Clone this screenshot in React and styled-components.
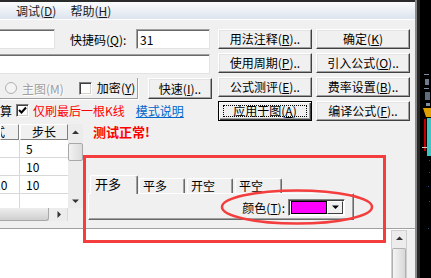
import React from "react";
import styled, { createGlobalStyle, css } from "styled-components";

const GlobalStyle = createGlobalStyle`
  html, body {
    margin: 0;
    padding: 0;
    background: #f0f0f0;
    overflow: hidden;
  }
  body {
    font-family: "Noto Sans CJK SC", "Liberation Sans", sans-serif;
    font-size: 12px;
    color: #000;
  }
`;

const Window = styled.div`
  display: flex;
  width: 431px;
  height: 278px;
  overflow: hidden;
`;

const Panel = styled.div`
  position: relative;
  width: 415px;
  flex: none;
  display: flex;
  flex-direction: column;
  background: #f0f0f0;
`;

const MenuBar = styled.div`
  height: 17px;
  border-top: 2px solid #2b2b2b;
  border-bottom: 1px solid #ffffff;
  background: linear-gradient(#fbfcfd, #dde4ee);
  display: flex;
  align-items: center;
  padding-left: 16px;
  gap: 14px;
  line-height: 14px;
  color: #1b1b1b;
`;

const Upper = styled.div`
  display: flex;
  padding-top: 9px;
`;

const LeftForm = styled.div`
  width: 218px;
  flex: none;
  display: flex;
  flex-direction: column;
`;

const FormRow = styled.div`
  display: flex;
  align-items: center;
  height: ${(p) => p.$h || 20}px;
  margin-top: ${(p) => p.$mt || 0}px;
`;

const TextBox = styled.div`
  box-sizing: border-box;
  width: ${(p) => p.$w}px;
  height: 20px;
  flex: none;
  background: #fff;
  border: 1px solid;
  border-color: #a0a0a0 #e3e3e3 #e3e3e3 #a0a0a0;
  box-shadow: inset 1px 1px 0 #696969;
  padding: 2px 3px;
  line-height: 15px;
  ${(p) =>
    p.$cut &&
    css`
      border-left: none;
      box-shadow: inset 0 1px 0 #696969;
    `}
`;

const Label = styled.span`
  width: ${(p) => p.$w}px;
  margin-left: ${(p) => p.$ml || 0}px;
  flex: none;
  white-space: nowrap;
`;

const ButtonGrid = styled.div`
  display: grid;
  grid-template-columns: 94px 94px;
  grid-auto-rows: 20px;
  column-gap: 4px;
  row-gap: 4px;
  align-content: start;
`;

const Button = styled.div`
  box-sizing: border-box;
  width: ${(p) => (p.$w ? `${p.$w}px` : "auto")};
  height: ${(p) => p.$h || 20}px;
  margin-left: ${(p) => p.$ml || 0}px;
  flex: none;
  display: flex;
  align-items: center;
  justify-content: center;
  background: #f0f0f0;
  border: 1px solid;
  border-color: #fff #404040 #404040 #fff;
  box-shadow: inset -1px -1px 0 #a0a0a0, inset 1px 1px 0 #e3e3e3;
  white-space: nowrap;
  line-height: 14px;
  ${(p) =>
    p.$focus &&
    css`
      border-color: #000;
      box-shadow: inset 1px 1px 0 #fff, inset -1px -1px 0 #404040,
        inset -2px -2px 0 #a0a0a0;
    `}
`;

const FocusRect = styled.span`
  box-sizing: border-box;
  width: calc(100% - 8px);
  height: calc(100% - 6px);
  border: 1px dotted #000;
  display: flex;
  align-items: center;
  justify-content: center;
`;

const Group = styled.div`
  box-sizing: border-box;
  width: 138px;
  height: 21px;
  flex: none;
  display: flex;
  align-items: center;
  padding-left: 5px;
  border-right: 1px solid #a0a0a0;
  border-bottom: 1px solid #a0a0a0;
  box-shadow: 1px 1px 0 #fff;
`;

const RadioDot = styled.span`
  box-sizing: border-box;
  width: 12px;
  height: 12px;
  border-radius: 50%;
  border: 1px solid #b0b0b0;
  background: #f4f4f4;
  flex: none;
`;

const Dim = styled.span`
  color: #a0a0a0;
  text-shadow: 1px 1px 0 #fff;
  margin-left: 5px;
  white-space: nowrap;
`;

const CheckBox = styled.span`
  box-sizing: border-box;
  width: 13px;
  height: 13px;
  flex: none;
  margin-left: ${(p) => p.$ml || 0}px;
  background: #fff;
  border: 1px solid;
  border-color: #808080 #fff #fff #808080;
  box-shadow: inset 1px 1px 0 #404040, inset -1px -1px 0 #d4d0c8;
  display: flex;
  align-items: center;
  justify-content: center;
`;

const Text = styled.span`
  margin-left: ${(p) => p.$ml || 0}px;
  color: ${(p) => p.$color || "#000"};
  white-space: nowrap;
  line-height: 14px;
`;

const Link = styled.span`
  margin-left: ${(p) => p.$ml || 0}px;
  color: #0066cc;
  text-decoration: underline;
  white-space: nowrap;
  line-height: 14px;
`;

const Lower = styled.div`
  display: flex;
  margin-top: 3px;
`;

const GridBox = styled.div`
  width: 83px;
  flex: none;
  display: grid;
  grid-template-columns: 68px 15px;
  grid-template-rows: 84px 13px;
`;

const Table = styled.div`
  display: grid;
  grid-template-columns: 19px 48px;
  grid-template-rows: 16px repeat(4, 18px);
  column-gap: 1px;
  background: #fff;
  overflow: hidden;
`;

const HeadCell = styled.div`
  box-sizing: border-box;
  background: #f0f0f0;
  border: 1px solid;
  border-color: #fff #808080 #808080 #fff;
  overflow: hidden;
  white-space: nowrap;
  line-height: 14px;
  text-indent: ${(p) => p.$indent || 0}px;
  text-align: ${(p) => (p.$center ? "center" : "left")};
`;

const Cell = styled.div`
  box-sizing: border-box;
  border-bottom: 1px solid #d8d8d8;
  box-shadow: 1px 0 0 #d8d8d8;
  overflow: hidden;
  white-space: nowrap;
  line-height: 17px;
  padding-left: 6px;
  text-indent: ${(p) => p.$indent || 0}px;
`;

const VScroll = styled.div`
  display: flex;
  flex-direction: column;
  align-items: stretch;
  background: #ececec;
`;

const ArrowBox = styled.div`
  height: ${(p) => p.$h || 15}px;
  display: flex;
  align-items: center;
  justify-content: center;
  flex: none;
`;

const Thumb = styled.div`
  height: 16px;
  margin: 3px 0 0;
  border: 1px solid #a8a8a8;
  border-radius: 2px;
  background: linear-gradient(90deg, #f2f2f2, #dcdcdc);
`;

const HScroll = styled.div`
  display: flex;
  align-items: center;
  background: #ececec;
  border-right: 1px solid #dadada;
`;

const HThumb = styled.div`
  width: 48px;
  height: 12px;
  border: 1px solid #a8a8a8;
  border-top: none;
  border-left: none;
  border-radius: 0 0 3px 0;
  background: linear-gradient(#eeeeee, #cfcfcf);
`;

const Corner = styled.div`
  background: #f0f0f0;
`;

const Work = styled.div`
  flex: 1;
  display: flex;
  flex-direction: column;
  padding-left: 5px;
`;

const Status = styled.div`
  margin: 1px 0 0 5px;
  color: #ff0000;
  font-size: 13px;
  font-weight: bold;
  line-height: 14px;
`;

const TabControl = styled.div`
  margin-top: 36px;
  width: 266px;
`;

const TabStrip = styled.div`
  display: flex;
  align-items: flex-end;
  height: 18px;
  padding-left: 2px;
`;

const Tab = styled.div`
  box-sizing: border-box;
  width: ${(p) => p.$w}px;
  height: ${(p) => (p.$active ? 19 : 15)}px;
  margin-left: ${(p) => p.$ml || 0}px;
  margin-bottom: ${(p) => (p.$active ? -1 : 0)}px;
  position: relative;
  z-index: ${(p) => (p.$active ? 1 : 0)};
  background: #f0f0f0;
  border-top: 1px solid #fff;
  border-left: 1px solid #fff;
  border-right: 1px solid #696969;
  border-radius: 2px 2px 0 0;
  box-shadow: inset -1px 0 0 #a0a0a0;
  padding-left: ${(p) => (p.$active ? 4 : 3)}px;
  line-height: ${(p) => (p.$active ? 16 : 13)}px;
  font-size: ${(p) => (p.$active ? 13 : 12)}px;
  white-space: nowrap;
`;

const TabBody = styled.div`
  box-sizing: border-box;
  height: 27px;
  border: 1px solid;
  border-color: #fff #696969 #696969 #fff;
  box-shadow: inset -1px -1px 0 #a0a0a0;
  display: flex;
  justify-content: flex-end;
  align-items: flex-start;
  padding: 5px 8px 0 0;
`;

const ColorRow = styled.div`
  display: flex;
  align-items: center;
  gap: 3px;
`;

const Combo = styled.div`
  box-sizing: border-box;
  width: 57px;
  height: 17px;
  display: flex;
  align-items: stretch;
  background: #fff;
  border: 1px solid;
  border-color: #808080 #fff #fff #808080;
  box-shadow: inset 1px 1px 0 #404040;
  padding: 1px 1px 1px 2px;
`;

const Swatch = styled.div`
  width: 34px;
  border: 1px solid #000;
  background: ${(p) => p.$color};
`;

const DropButton = styled.div`
  box-sizing: border-box;
  width: 16px;
  margin-left: auto;
  background: #f0f0f0;
  border: 1px solid;
  border-color: #fff #404040 #404040 #fff;
  display: flex;
  align-items: center;
  justify-content: center;
`;

const Separator = styled.div`
  margin-top: 7px;
  border-top: 1px solid #a0a0a0;
  border-bottom: 1px solid #fff;
`;

const Editor = styled.div`
  flex: 1;
  display: flex;
  padding-right: 8px;
`;

const EditorArea = styled.div`
  flex: 1;
  background: #fff;
`;

const EditorScroll = styled.div`
  box-sizing: border-box;
  width: 16px;
  display: flex;
  flex-direction: column;
  background: #ececec;
  border: 1px solid #cfcfcf;
  border-bottom: none;
`;

const EditorThumb = styled.div`
  flex: 1;
  margin-top: 2px;
  border: 1px solid #b0b0b0;
  border-bottom: none;
  border-radius: 2px 2px 0 0;
  background: linear-gradient(90deg, #f4f4f4, #d8d8d8);
`;

const RedFrame = styled.div`
  position: absolute;
  left: 83px;
  top: 155px;
  width: 303px;
  height: 88px;
  box-sizing: border-box;
  border: 3px solid #f43d3d;
  pointer-events: none;
`;

const RedEllipse = styled.svg`
  position: absolute;
  left: 220px;
  top: 188px;
  overflow: visible;
  pointer-events: none;
`;

const EdgeStrip = styled.div`
  flex: 1;
  background: #000;
  border-left: 2px solid #8a8a8a;
  box-shadow: inset 3px 0 0 #262626;
`;

const Tri = ({ dir = "up", size = 7, color = "#333" }) => {
  const pts = {
    up: "0,4 7,4 3.5,0.5",
    down: "0,0.5 7,0.5 3.5,4",
    right: "0.5,0 4,3.5 0.5,7",
  }[dir];
  const vb = dir === "right" ? "0 0 5 7" : "0 0 7 5";
  return (
    <svg width={dir === "right" ? 5 : size} height={dir === "right" ? 7 : 5} viewBox={vb}>
      <polygon points={pts} fill={color} />
    </svg>
  );
};

const Check = () => (
  <svg width="9" height="9" viewBox="0 0 9 9">
    <path d="M1 4 L3.5 6.5 L8 1.5" stroke="#000" strokeWidth="2" fill="none" />
  </svg>
);

const Key = ({ k }) => (
  <>
    (<u>{k}</u>)
  </>
);

const buttons = [
  ["用法注释", "R", ".."],
  ["确定", "K", ""],
  ["使用周期", "P", ".."],
  ["引入公式", "O", ".."],
  ["公式测评", "E", ".."],
  ["费率设置", "B", ".."],
  ["应用于图", "A", "", true],
  ["编译公式", "F", ".."],
];

const rows = [
  ["", "5"],
  ["", "10"],
  ["10", "10"],
  ["", ""],
];

const tabs = [
  { name: "开多", w: 48, ml: 0, active: true },
  { name: "平多", w: 46, ml: 1 },
  { name: "开空", w: 46, ml: 2 },
  { name: "平空", w: 47, ml: 2 },
];

export default function App() {
  return (
    <>
      <GlobalStyle />
      <Window>
        <Panel>
          <MenuBar>
            <span>
              调试<Key k="D" />
            </span>
            <span>
              帮助<Key k="H" />
            </span>
          </MenuBar>

          <Upper>
            <LeftForm>
              <FormRow>
                <TextBox $w={55} $cut />
                <Label $ml={15} $w={66}>
                  快捷码<Key k="Q" />:
                </Label>
                <TextBox $w={74}>31</TextBox>
              </FormRow>
              <FormRow $mt={5}>
                <TextBox $w={210} $cut />
              </FormRow>
              <FormRow $mt={4} $h={21}>
                <Group>
                  <RadioDot />
                  <Dim>主图(M)</Dim>
                  <CheckBox $ml={15} />
                  <Text $ml={5}>
                    加密<Key k="Y" />
                  </Text>
                </Group>
                <Button $w={64} $h={21} $ml={10}>
                  快速<Key k="I" />..
                </Button>
              </FormRow>
              <FormRow $mt={4} $h={15}>
                <Text>算</Text>
                <CheckBox $ml={4}>
                  <Check />
                </CheckBox>
                <Text $ml={4} $color="#ff0000">
                  仅刷最后一根K线
                </Text>
                <Link $ml={11}>模式说明</Link>
              </FormRow>
            </LeftForm>

            <ButtonGrid>
              {buttons.map(([label, key, tail, focus]) =>
                focus ? (
                  <Button key={label} $focus>
                    <FocusRect>
                      {label}
                      <Key k={key} />
                    </FocusRect>
                  </Button>
                ) : (
                  <Button key={label}>
                    {label}
                    <Key k={key} />
                    {tail}
                  </Button>
                )
              )}
            </ButtonGrid>
          </Upper>

          <Lower>
            <GridBox>
              <Table>
                <HeadCell $indent={-8}>式</HeadCell>
                <HeadCell $center>步长</HeadCell>
                {rows.map(([a, b], i) => (
                  <React.Fragment key={i}>
                    <Cell $indent={-12}>{a}</Cell>
                    <Cell>{b}</Cell>
                  </React.Fragment>
                ))}
              </Table>
              <VScroll>
                <ArrowBox $h={16}>
                  <Tri dir="up" />
                </ArrowBox>
                <Thumb />
                <div style={{ flex: 1 }} />
                <ArrowBox $h={14}>
                  <Tri dir="down" />
                </ArrowBox>
              </VScroll>
              <HScroll>
                <HThumb />
                <ArrowBox style={{ marginLeft: 8 }}>
                  <Tri dir="right" />
                </ArrowBox>
              </HScroll>
              <Corner />
            </GridBox>

            <Work>
              <Status>测试正常!</Status>
              <TabControl>
                <TabStrip>
                  {tabs.map((t) => (
                    <Tab key={t.name} $w={t.w} $ml={t.ml} $active={t.active}>
                      {t.name}
                    </Tab>
                  ))}
                </TabStrip>
                <TabBody>
                  <ColorRow>
                    <Text>
                      颜色<Key k="T" />:
                    </Text>
                    <Combo>
                      <Swatch $color="#ff00ff" />
                      <DropButton>
                        <Tri dir="down" color="#000" />
                      </DropButton>
                    </Combo>
                  </ColorRow>
                </TabBody>
              </TabControl>
            </Work>
          </Lower>

          <Separator />

          <Editor>
            <EditorArea />
            <EditorScroll>
              <ArrowBox $h={15}>
                <Tri dir="up" />
              </ArrowBox>
              <EditorThumb />
            </EditorScroll>
          </Editor>

          <RedFrame />
          <RedEllipse width="155" height="38" viewBox="0 0 155 38">
            <ellipse cx="77" cy="19" rx="75" ry="16.5" fill="none" stroke="#f43d3d" strokeWidth="2.5" />
          </RedEllipse>
        </Panel>

        <EdgeStrip>
          <svg width="14" height="278" viewBox="0 0 14 278">
            <rect x="7" y="74" width="5" height="1" fill="#7f8ea0" />
            <rect x="8" y="79" width="4" height="6" fill="#6e7c8e" />
            <rect x="7" y="88" width="5" height="1" fill="#7f8ea0" />
            <rect x="8" y="92" width="5" height="8" fill="#5e6c7e" />
            <rect x="9" y="103" width="4" height="3" fill="#7f8ea0" />
            <polygon points="6,108 14,108 14,117 9,117" fill="#e0a000" />
            <rect x="7" y="119" width="2" height="32" fill="#c00000" />
            <rect x="10" y="118" width="4" height="38" fill="#3fc4c4" />
            <rect x="5" y="147" width="5" height="1" fill="#d0d0d0" />
            <rect x="12" y="160" width="1" height="1" fill="#2a4aa0" />
            <rect x="12" y="172" width="1" height="1" fill="#2a4aa0" />
            <rect x="11" y="186" width="1" height="1" fill="#2a4aa0" />
            <rect x="12" y="201" width="1" height="1" fill="#2a4aa0" />
            <rect x="11" y="228" width="1" height="1" fill="#2a4aa0" />
          </svg>
        </EdgeStrip>
      </Window>
    </>
  );
}
